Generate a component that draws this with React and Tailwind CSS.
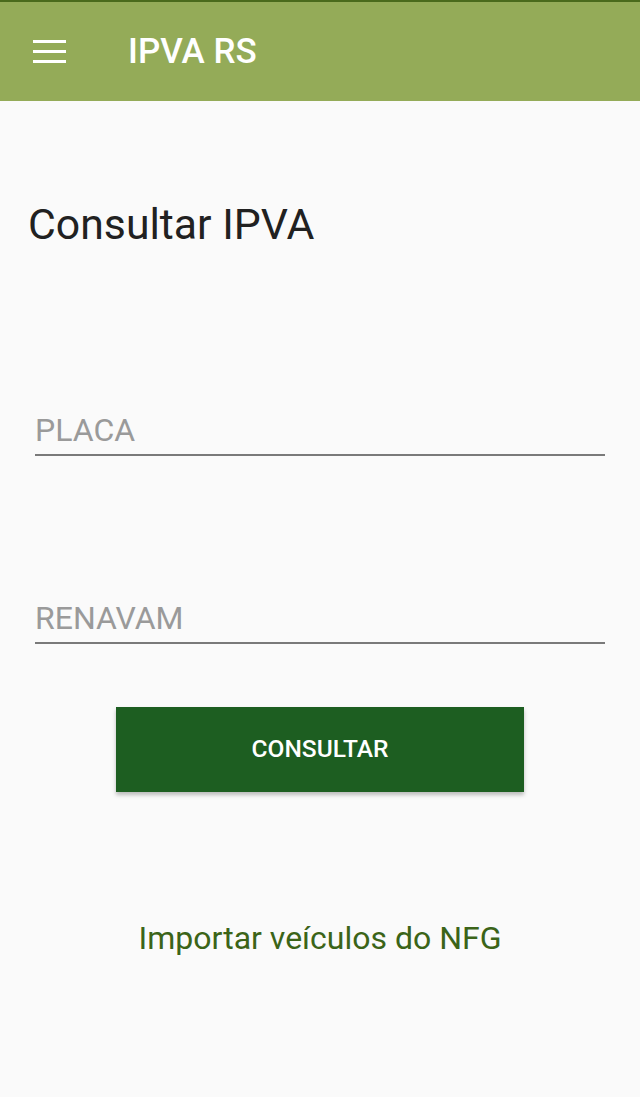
import React from "react";

export default function App() {
  return (
    <div className="min-h-[1097px] bg-[#fafafa] font-['Roboto',sans-serif]">
      {/* App bar */}
      <header className="h-[101px] border-t-2 border-[#4a6a1c] bg-[#94ab58] flex items-center">
        <button className="ml-[33px] w-[33px] flex flex-col gap-[7px]">
          <span className="block h-[3px] bg-white" />
          <span className="block h-[3px] bg-white" />
          <span className="block h-[3px] bg-white" />
        </button>
        <h1 className="ml-[62px] text-white text-[35px] font-medium leading-none">IPVA RS</h1>
      </header>

      <main className="px-[28px]">
        <h2 className="mt-[102px] text-[42.75px] leading-none text-[#212121]">Consultar IPVA</h2>

        {/* Fields */}
        <div className="mt-[167px] px-[7px] flex flex-col gap-[145px]">
          <div className="border-b-2 border-[#7a7a7a] pb-[6px]">
            <input
              placeholder="PLACA"
              className="w-full bg-transparent text-[32px] leading-[34px] text-[#333] placeholder:text-[#9a9a9a] outline-none"
            />
          </div>
          <div className="border-b-2 border-[#7a7a7a] pb-[6px]">
            <input
              placeholder="RENAVAM"
              className="w-full bg-transparent text-[32px] leading-[34px] text-[#333] placeholder:text-[#9a9a9a] outline-none"
            />
          </div>
        </div>

        {/* Button */}
        <div className="mt-[63px] flex justify-center">
          <button className="w-[408px] h-[85px] bg-[#1d5e21] text-white text-[24.5px] font-medium shadow-[0_3px_4px_rgba(0,0,0,0.25)]">
            CONSULTAR
          </button>
        </div>

        <p className="mt-[130px] text-center text-[32px] leading-none text-[#3b6418]">Importar veículos do NFG</p>
      </main>
    </div>
  );
}
